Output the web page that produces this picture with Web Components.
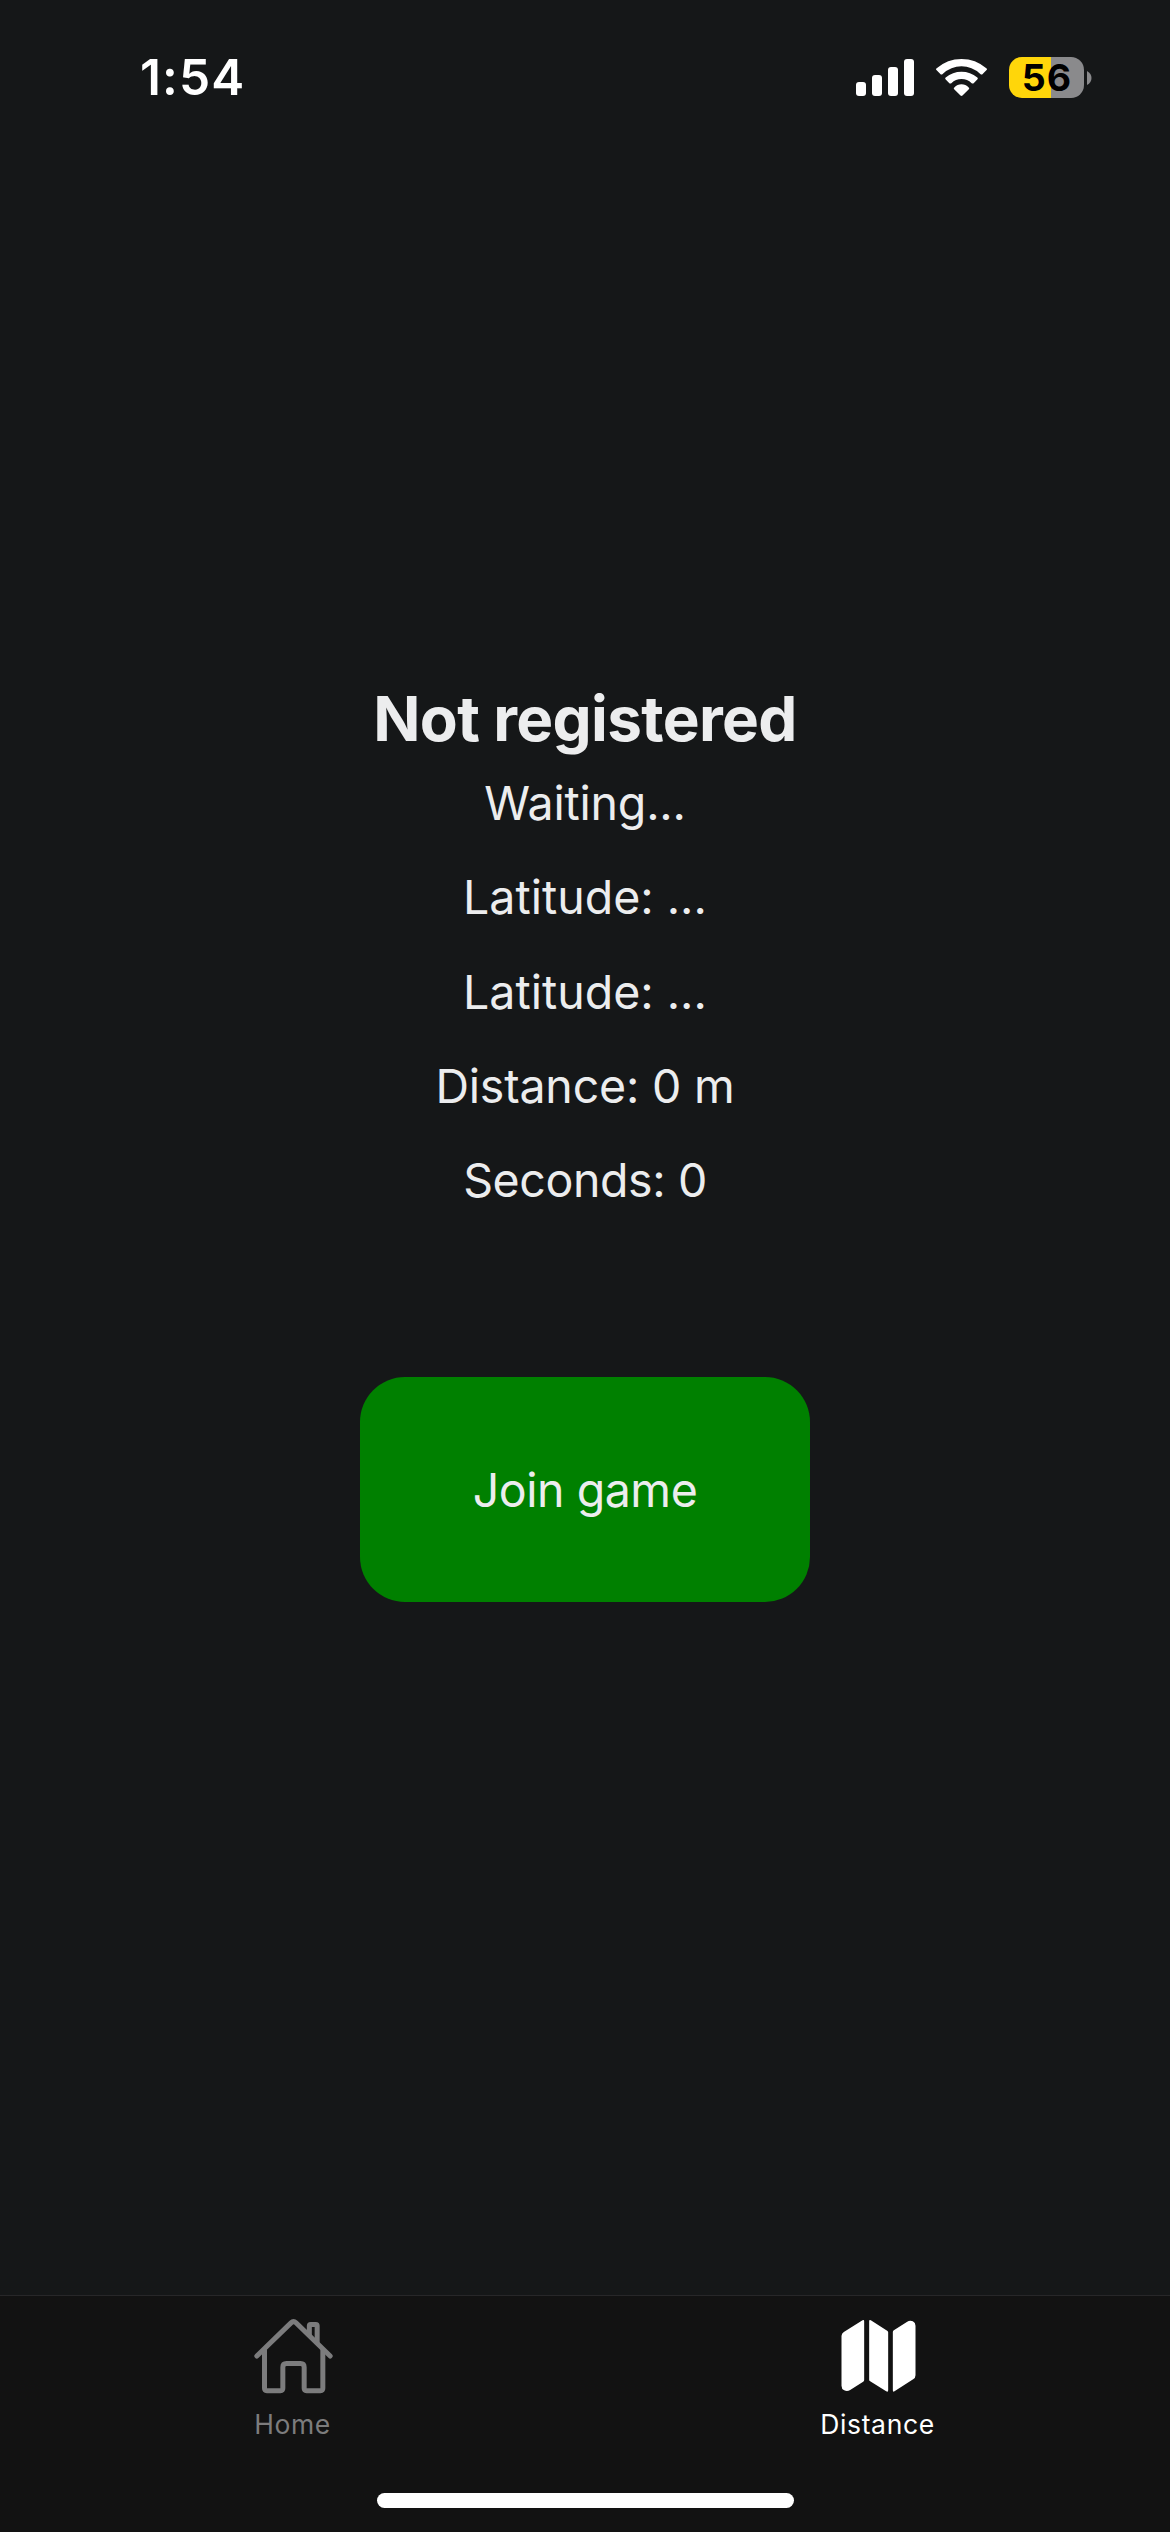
<!DOCTYPE html>
<html lang="en">
<head>
<meta charset="utf-8">
<title>Distance</title>
<style>
html,body{margin:0;height:100%;background:#151718}
body{font-family:Inter,"Liberation Sans",sans-serif;overflow:hidden}
</style>
</head>
<body>
<app-screen>
  <status-bar slot="top" time="1:54" battery="56"></status-bar>
  <heading-text>Not registered</heading-text>
  <info-list>
    <info-line style="--ls:-.2px">Waiting...</info-line>
    <info-line>Latitude: ...</info-line>
    <info-line>Latitude: ...</info-line>
    <info-line style="--ls:-.19px">Distance: 0 m</info-line>
    <info-line style="--ls:-.4px">Seconds: 0</info-line>
  </info-list>
  <action-button>Join game</action-button>
  <tab-bar slot="bottom">
    <tab-item label="Home" style="--ls:.55px">
      <svg width="90" height="80" viewBox="52.5 105 270 240" fill="none" stroke="currentColor" stroke-width="15" stroke-linecap="round" stroke-linejoin="round">
        <path d="M79 228L181.500 128.500Q189 121 196.500 128.500L299 228"/>
        <path d="M102 211V325Q102 332 109 332H150Q157 332 157 325V262Q157 250.500 168 250.500H210Q221 250.500 221 262V325Q221 332 228 332H270Q277 332 277 325V211"/>
        <path d="M236.500 164V137.500Q236.500 133.500 240.500 133.500H256Q260 133.500 260 137.500V186"/>
      </svg>
    </tab-item>
    <tab-item label="Distance" active style="--ls:.66px">
      <svg width="90" height="80" viewBox="97.500 105 270 240" fill="currentColor">
        <path d="M123 168Q123 160 130 156L186 121Q191 118 191 124V300Q191 303 188 305L149 330Q140 336 131 331Q123 327 123 317Z"/>
        <path d="M206 124Q206 118 211 121L260 152Q263 154 263 157V331Q263 338 257 334L209 304Q206 302 206 299Z"/>
        <path d="M277 156Q277 153 280 151L319 126Q328 120 337 124Q345 128 345 137V286Q345 294 338 298L282 334Q277 337 277 331Z"/>
      </svg>
    </tab-item>
  </tab-bar>
</app-screen>
<script>
const define = (name, html, setup) => {
  const template = document.createElement('template');
  template.innerHTML = html;
  customElements.define(name, class extends HTMLElement {
    constructor() {
      super();
      this.attachShadow({mode: 'open'}).append(template.content.cloneNode(true));
    }
    connectedCallback() { if (setup) setup(this, this.shadowRoot); }
  });
};

define('app-screen', `
<style>
:host{display:flex;flex-direction:column;width:1170px;height:2532px;background:#151718;color:#ecedee}
main{flex:1;display:flex;flex-direction:column;align-items:center;padding-top:563px;box-sizing:border-box}
</style>
<slot name="top"></slot><main><slot></slot></main><slot name="bottom"></slot>`);

define('status-bar', `
<style>
:host{display:flex;justify-content:space-between;align-items:center;height:61px;padding:47px 78px 0 140px;color:#fff}
.time{font-size:49.5px;font-weight:600;line-height:61px;letter-spacing:1.15px}
.icons{display:flex;gap:22px;align-items:center}
svg{display:block}
.battery{display:flex;align-items:center;gap:3px}
.cell{width:75px;height:41px;border-radius:13px;background:linear-gradient(90deg,#ffd60a 42px,#8a8a8c 42px);color:#000;display:flex;align-items:center;justify-content:center}
.cell span{font-size:37.5px;font-weight:700;line-height:41px;letter-spacing:1px;margin-right:-1px}
</style>
<div class="time"></div>
<div class="icons">
  <svg width="58" height="41" viewBox="0 0 58 41" fill="currentColor">
    <rect y="25" width="10" height="14" rx="3"/><rect x="16" y="18" width="10" height="21" rx="3"/><rect x="32" y="10" width="10" height="29" rx="3"/><rect x="48" y="2" width="10" height="37" rx="3"/>
  </svg>
  <svg width="51" height="41" viewBox="288 51 153 123" fill="currentColor">
    <path d="M290 91Q286 88 290 85Q322 57 364.500 57Q407 57 439 85Q443 88 439 91L428 102Q425 105 421 102Q396 79 364.500 79Q333 79 308 102Q304 105 301 102Z"/>
    <path d="M316.500 118Q314 115 317 112.500Q338 95 364.500 95Q391 95 412 112.500Q415 115 412.500 118L401 129.500Q398 132 395 129.500Q382 117 364.500 117Q347 117 334 129.500Q331 132 328 129.500Z"/>
    <path d="M342.500 148Q339.500 145 343 142.500Q352 133 364.500 133Q377 133 386 142.500Q389.500 145 386.500 148L367.500 166.500Q364.500 169 361.500 166.500Z"/>
  </svg>
  <div class="battery"><div class="cell"><span></span></div>
    <svg width="5" height="14" viewBox="0 0 5 14"><path d="M0 0Q4.500 2.500 4.500 7T0 14Z" fill="#8a8a8c"/></svg>
  </div>
</div>`, (host, root) => {
  root.querySelector('.time').textContent = host.getAttribute('time');
  root.querySelector('.cell span').textContent = host.getAttribute('battery');
});

define('heading-text', `
<style>:host{display:block;font-size:62px;font-weight:700;line-height:96px;letter-spacing:-.67px;white-space:nowrap}</style><slot></slot>`);

define('info-list', `
<style>:host{display:flex;flex-direction:column;align-items:center;gap:22.25px}</style><slot></slot>`);

define('info-line', `
<style>:host{display:block;font-size:46.5px;line-height:72px;letter-spacing:var(--ls,0);white-space:nowrap}</style><slot></slot>`);

define('action-button', `
<style>
:host{display:block;margin-top:161px}
button{all:unset;display:flex;align-items:center;justify-content:center;width:450px;height:225px;border-radius:45px;background:green;font-size:46.5px;line-height:72px;letter-spacing:-.45px}
</style><button><slot></slot></button>`);

define('tab-bar', `
<style>
:host{display:flex;flex-direction:column;justify-content:space-between;align-items:center;height:236px;border-top:1px solid #272729;background:#121212}
nav{display:flex;width:100%}
.grip{width:417px;height:15px;border-radius:7.5px;background:#fff;margin-bottom:24px}
</style><nav><slot></slot></nav><div class="grip"></div>`);

define('tab-item', `
<style>
:host{flex:1;display:flex;flex-direction:column;align-items:center;gap:11px;padding-top:19px;color:#7c7c7d}
:host([active]){color:#fff}
::slotted(svg){display:block}
span{font-size:26.5px;line-height:36px;letter-spacing:var(--ls,0)}
</style><slot></slot><span></span>`, (host, root) => {
  root.querySelector('span').textContent = host.getAttribute('label');
});
</script>
</body>
</html>
